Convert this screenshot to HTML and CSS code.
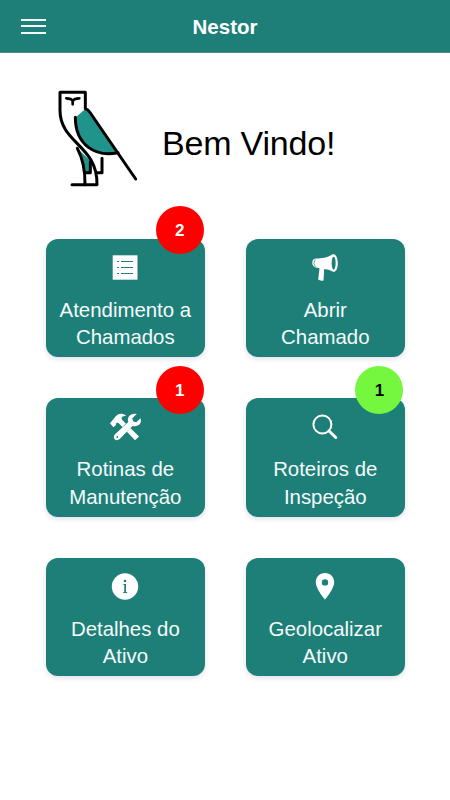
FILE: index.html
```
<!DOCTYPE html>
<html lang="pt-BR">
<head>
<meta charset="utf-8">
<meta name="viewport" content="width=device-width, initial-scale=1">
<title>Nestor</title>
<link rel="stylesheet" href="styles.css">
</head>
<body>
<header class="topbar">
  <button class="menu" aria-label="Menu"><span></span><span></span><span></span></button>
  <h1 class="title">Nestor</h1>
</header>
<main>
  <section class="welcome">
    <svg class="owl" viewBox="0 0 330 345" fill="none" stroke="#000" stroke-width="9" stroke-linecap="round" stroke-linejoin="round">
      <path d="M97 205L120 278H136V242Z" fill="#20948b" stroke="none"/>
      <path d="M121 87L92 112C92 170 136 222 190 222L219 218L134 96Q128 87 121 87Z" fill="#20948b" stroke="none"/>
      <path d="M121 84V37H45V91C45 190 158 195 156 314H81"/>
      <path d="M97 205Q121 250 120 314"/>
      <path d="M121 278H136V245M155 278H171V235"/>
      <path d="M91 112C91 195 151 232 219 218"/>
      <path d="M121 86Q129 88 134 96L272 297"/>
      <path d="M64 55Q79 55 83 63Q88 55 103 55M83 63V73" stroke-width="8"/>
    </svg>
    <h2 class="greeting">Bem Vindo!</h2>
  </section>
  <nav class="grid">
    <a class="card">
      <span class="badge">2</span>
      <svg class="icon" viewBox="0 0 40 40"><path fill="#fff" d="M7.7 5.3h24.8v24.4H7.7z"/><path stroke="#1e7f79" d="M12 11.5h2m2 0h12m-16 6h2m2 0h12m-16 6h2m2 0h12"/></svg>
      <span class="label">Atendimento a<br>Chamados</span>
    </a>
    <a class="card">
      <svg class="icon" viewBox="0 0 40 40"><path fill="#fff" fill-rule="evenodd" d="M11 8.5C6.3 8 5.8 17.2 11 17.5L14.5 18.2L13.2 29.6Q15.5 31.3 18.5 30.4L19.2 19Q24 19 27.5 21.5C34.5 24 34.7 2.7 27.5 4.3C22 8 17 8.5 11 8.5ZM28.7 6.8C31.4 7 31.2 19.6 28.7 19.6C26 19.4 26.1 6.9 28.7 6.8Z"/><path d="M10.3 9.5Q7.5 13 10.3 17" fill="none" stroke="#1e7f79" stroke-width=".7"/></svg>
      <span class="label">Abrir<br>Chamado</span>
    </a>
    <a class="card">
      <span class="badge">1</span>
      <svg class="icon" viewBox="0 0 40 40"><path fill="#fff" d="M5 14.2L11 7C14 4.4 17 4.1 21.3 6.5L17.8 7.5Q15.6 9 17.5 11.2L34 27.5L30 31.2L14 14.6Q12.6 12.8 10.8 14.5L11 16.1L8.4 18.2Z"/><path d="M13 27L26 14" stroke="#1e7f79" stroke-width="6.6"/><path fill="#fff" d="M31.8 5.1L27.2 9.3L28.3 12.5L31.3 13.2L35.5 9.3C37.2 14.6 33.3 18.2 27.5 17L14.7 30C10.8 33.2 6.9 29 10 25.2L23.3 13C21.6 8 25.8 3.6 31.8 5.1Z"/><circle cx="12.3" cy="28" r=".9" fill="#1e7f79"/></svg>
      <span class="label">Rotinas de<br>Manutenção</span>
    </a>
    <a class="card">
      <span class="badge badge-ok">1</span>
      <svg class="icon" viewBox="0 0 40 40" fill="none" stroke="#fff"><circle cx="17.4" cy="15.5" r="9" stroke-width="2"/><path d="M24 22L30.8 28.5" stroke-width="3" stroke-linecap="round"/></svg>
      <span class="label">Roteiros de<br>Inspeção</span>
    </a>
    <a class="card">
      <svg class="icon" viewBox="0 0 40 40"><circle cx="20" cy="17.5" r="13.2" fill="#fff"/><g fill="#1e7f79"><circle cx="20" cy="12" r="1.3"/><path d="M18.2 15.1H21V22.7L22.3 23.5V24.1H18V23.5L19.3 22.7V15.9L18.2 15.7Z"/></g></svg>
      <span class="label">Detalhes do<br>Ativo</span>
    </a>
    <a class="card">
      <svg class="icon" viewBox="0 0 40 40"><path fill="#fff" fill-rule="evenodd" d="M20 4C14.5 4 10.8 8.2 10.8 13.2C10.8 20 20 30.5 20 30.5S29.2 20 29.2 13.2C29.2 8.2 25.5 4 20 4ZM20 10.2A3.2 3.2 0 1 1 20 16.6A3.2 3.2 0 1 1 20 10.2Z"/></svg>
      <span class="label">Geolocalizar<br>Ativo</span>
    </a>
  </nav>
</main>
</body>
</html>
```
FILE: styles.css
```
* { box-sizing: border-box; }
body {
  margin: 0;
  min-height: 800px;
  background: #fff;
  font-family: "Liberation Sans", Arial, sans-serif;
}
.topbar {
  display: grid;
  grid-template-columns: 68px 1fr 68px;
  align-items: center;
  height: 53px;
  background: #1e7f79;
  border-bottom: 1px solid #5b8a86;
}
.menu {
  display: flex;
  flex-direction: column;
  gap: 4.5px;
  width: 25px;
  margin: 0 0 0 21px;
  padding: 0;
  border: 0;
  background: none;
}
.menu span { height: 2px; width: 25px; background: #f4ffff; }
.title {
  margin: 1px 0 0;
  color: #fff;
  font-size: 20.5px;
  line-height: 24px;
  text-align: center;
}
.welcome {
  display: flex;
  align-items: center;
  height: 115px;
  margin: 27px 0 0 45px;
}
.owl { width: 110px; height: 115px; }
.greeting {
  margin: 10px 0 0 7px;
  font-size: 34px;
  line-height: 40px;
  letter-spacing: -.2px;
  font-weight: 400;
  color: #000;
}
.grid {
  display: grid;
  grid-template-columns: 159.5px 159px;
  grid-auto-rows: 118.3px;
  gap: 41.2px 40.7px;
  margin: 43.8px 0 0 45.6px;
}
.card {
  position: relative;
  display: flex;
  flex-direction: column;
  align-items: center;
  padding-top: 11px;
  border-radius: 12px;
  background: #1e7f79;
  box-shadow: 0 2px 5px rgba(40, 40, 110, .15);
}
.icon { width: 40px; height: 40px; flex: none; }
.label {
  margin-top: 7px;
  color: #f4fbfa;
  font-size: 20.4px;
  line-height: 27.4px;
  text-align: center;
  white-space: nowrap;
}
.badge {
  position: absolute;
  top: -32.6px;
  right: 1.3px;
  width: 48px;
  height: 48px;
  border-radius: 50%;
  background: #f00;
  color: #fff;
  font-size: 17px;
  font-weight: 700;
  line-height: 49px;
  text-align: center;
}
.badge-ok { background: #74f73e; color: #000; }
```
